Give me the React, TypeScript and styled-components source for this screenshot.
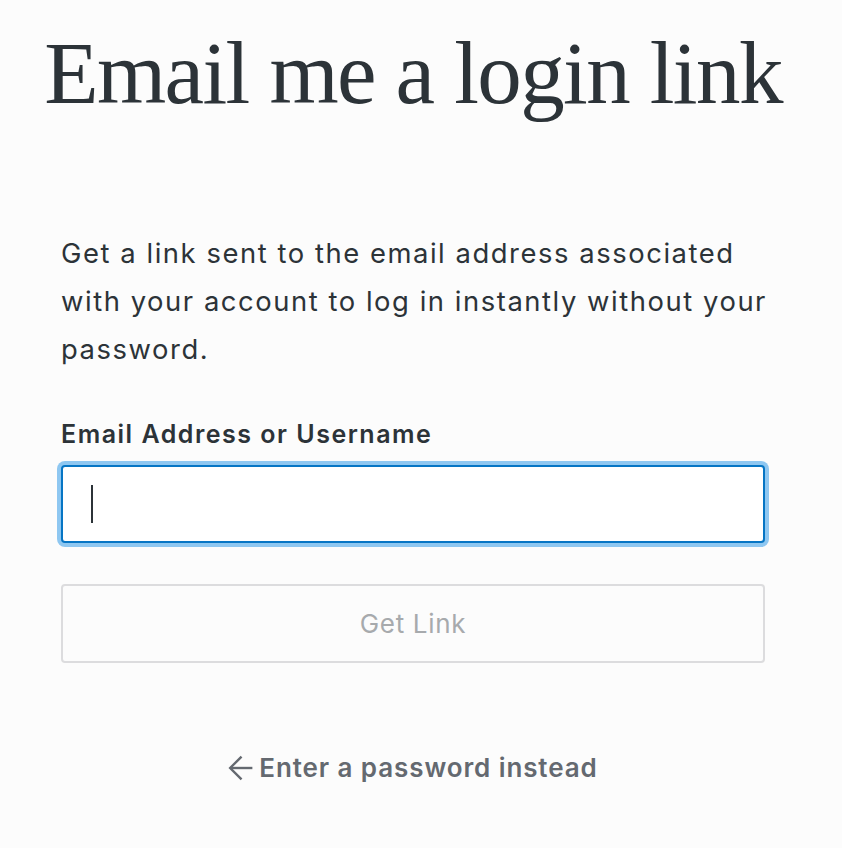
import React from 'react'
import styled, { createGlobalStyle } from 'styled-components'

const GlobalStyle = createGlobalStyle`
  html, body {
    margin: 0;
    padding: 0;
    background: #fcfcfc;
  }
  body {
    font-family: Inter, "Noto Sans", sans-serif;
    color: #2c3338;
  }
`

const Page = styled.div`
  width: 842px;
  height: 848px;
  box-sizing: border-box;
  display: flex;
  flex-direction: column;
  align-items: center;
  padding: 13px 16px 0 0;
`

const Heading = styled.h1`
  margin: 0;
  font-family: "Liberation Serif", "DejaVu Serif", serif;
  font-weight: 400;
  font-size: 89px;
  line-height: 120px;
  letter-spacing: -1.6px;
  color: #2c3338;
  white-space: nowrap;
`

const Form = styled.div`
  width: 704px;
  margin-top: 96px;
  display: flex;
  flex-direction: column;
`

const Intro = styled.p`
  margin: 0;
  font-size: 27.4px;
  line-height: 48px;
  letter-spacing: 1.55px;
  white-space: nowrap;
  color: #2c3338;
`

const Label = styled.label`
  margin-top: 43px;
  font-size: 25px;
  font-weight: 600;
  line-height: 36px;
  letter-spacing: 1.5px;
  color: #2c3338;
`

const InputWrap = styled.div`
  position: relative;
  margin-top: 13px;
`

const Input = styled.input`
  display: block;
  width: 100%;
  height: 78px;
  box-sizing: border-box;
  padding: 0 28px;
  border: 2px solid #0675c4;
  border-radius: 4px;
  box-shadow: 0 0 0 4px #8ec7f1;
  background: #fff;
  font-size: 27px;
  font-family: inherit;
  color: #2c3338;
  caret-color: transparent;
  outline: none;
`

const Caret = styled.span`
  position: absolute;
  left: 30px;
  top: 20px;
  width: 2px;
  height: 38px;
  background: #2c3338;
  pointer-events: none;
`

const Button = styled.button`
  margin-top: 41px;
  height: 79px;
  border: 2px solid #dcdcde;
  border-radius: 4px;
  background: #fcfcfc;
  color: #a7aaad;
  font-family: inherit;
  font-size: 26px;
  letter-spacing: 0.7px;
  cursor: default;
`

const BackLink = styled.a`
  margin-top: 87px;
  display: flex;
  align-items: center;
  gap: 5px;
  font-size: 26px;
  font-weight: 600;
  line-height: 36px;
  letter-spacing: 0.9px;
  color: #646970;
  text-decoration: none;
`

const Arrow = () => (
  <svg width="26" height="26" viewBox="0 0 24 24" fill="none" stroke="currentColor" strokeWidth="2.2" strokeLinecap="butt" strokeLinejoin="miter">
    <path d="M22.5 12H2" />
    <path d="M12.5 1.5L2 12l10.5 10.5" />
  </svg>
)

export default function App() {
  return (
    <>
      <GlobalStyle />
      <Page>
        <Heading>Email me a login link</Heading>
        <Form>
          <Intro>
            Get a link sent to the email address associated
            <br />
            with your account to log in instantly without your
            <br />
            password.
          </Intro>
          <Label htmlFor="usernameOrEmail">Email Address or Username</Label>
          <InputWrap>
            <Input id="usernameOrEmail" type="text" autoFocus />
            <Caret />
          </InputWrap>
          <Button disabled>Get Link</Button>
        </Form>
        <BackLink href="#">
          <Arrow />
          Enter a password instead
        </BackLink>
      </Page>
    </>
  )
}
